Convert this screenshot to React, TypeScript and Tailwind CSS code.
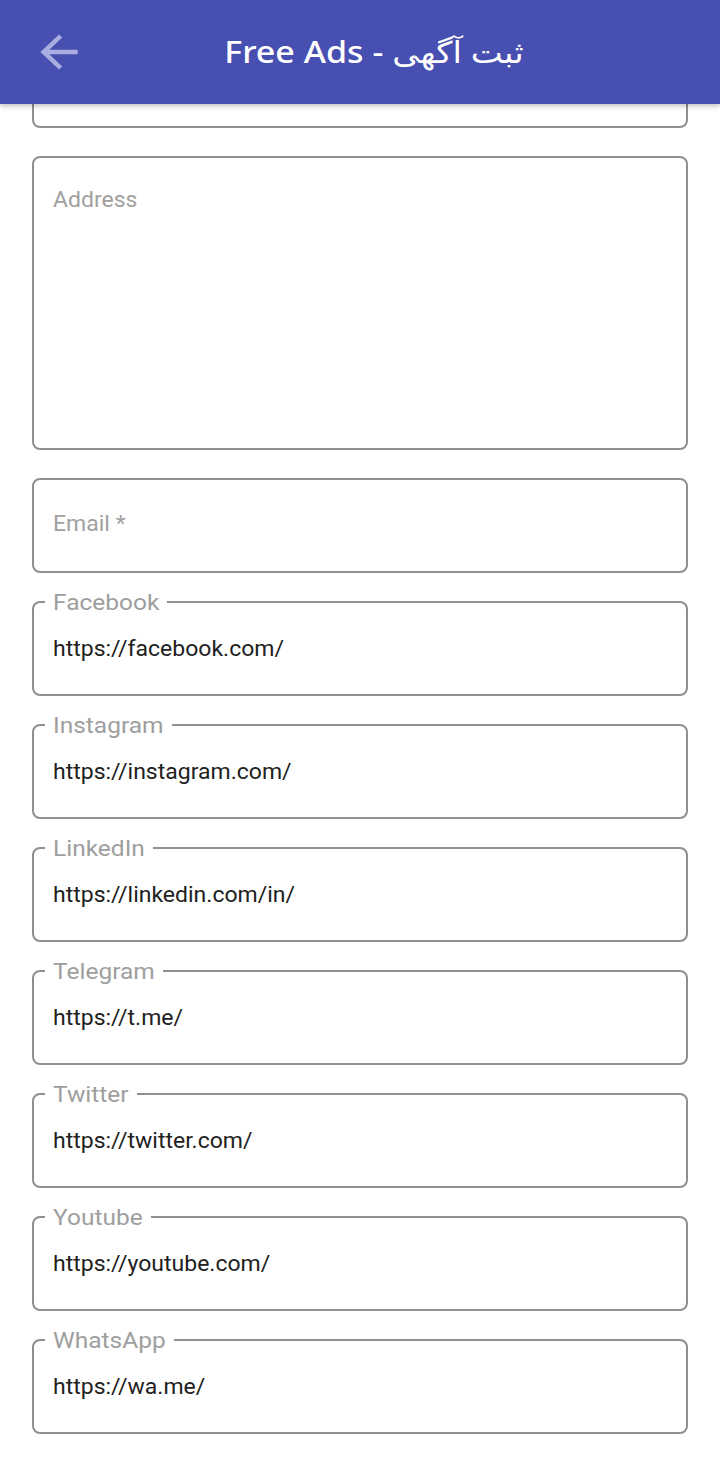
import React from 'react';

const links = [
  { label: 'Facebook', value: 'https://facebook.com/' },
  { label: 'Instagram', value: 'https://instagram.com/' },
  { label: 'LinkedIn', value: 'https://linkedin.com/in/' },
  { label: 'Telegram', value: 'https://t.me/' },
  { label: 'Twitter', value: 'https://twitter.com/' },
  { label: 'Youtube', value: 'https://youtube.com/' },
  { label: 'WhatsApp', value: 'https://wa.me/' },
];

const OutlinedField: React.FC<{ label: string; value: string }> = ({ label, value }) => (
  <div className="relative h-[95px] rounded-lg border-2 border-[#8f8f8f] flex items-center px-[19px] pt-[3px]">
    {/* floating label sits over the top border */}
    <span className="absolute left-[11px] -top-[14px] bg-white px-[8px] text-[24.5px] leading-[28px] text-[#9e9e9e] scale-y-[0.92]">
      {label}
    </span>
    <span className="inline-block text-[23px] text-[#212121] scale-y-[0.92]">{value}</span>
  </div>
);

const App: React.FC = () => {
  return (
    <div className="w-[720px] min-h-[1465px] bg-white" style={{ fontFamily: 'Roboto, "Noto Sans", "DejaVu Sans", sans-serif' }}>
      <header className="relative z-10 h-[104px] bg-[#474fb1] flex items-center shadow-[0_2px_5px_rgba(0,0,0,0.25)]">
        <div className="w-[88px] flex justify-end pr-[2px]">
          <svg width="56" height="56" viewBox="0 0 24 24" fill="#a9addf" className="-mr-[1px] scale-y-[0.94]">
            <path d="M20 11H7.83l5.59-5.59L12 4l-8 8 8 8 1.41-1.41L7.83 13H20v-2z" />
          </svg>
        </div>
        <div className="flex-1 pr-[60px] text-center">
          <h1
            className="inline-block text-white text-[34px] leading-[44px] font-medium scale-y-[0.88]"
            style={{ fontFamily: '"Noto Sans", "DejaVu Sans", sans-serif' }}
          >
            Free Ads - ثبت آگهی
          </h1>
        </div>
      </header>

      <main className="px-8 flex flex-col gap-7 pb-8">
        {/* bottom of a field scrolled under the toolbar */}
        <div className="h-[24px] rounded-b-lg border-2 border-t-0 border-[#8f8f8f]" />

        <div className="h-[294px] rounded-lg border-2 border-[#8f8f8f] px-[19px] pt-[26px]">
          <span className="inline-block text-[23px] text-[#a0a0a0] scale-y-[0.92]">Address</span>
        </div>

        <div className="h-[95px] rounded-lg border-2 border-[#8f8f8f] flex items-center px-[19px]">
          <span className="inline-block text-[23px] text-[#a0a0a0] scale-y-[0.92]">Email *</span>
        </div>

        {links.map((l) => (
          <OutlinedField key={l.label} label={l.label} value={l.value} />
        ))}
      </main>
    </div>
  );
};

export default App;
